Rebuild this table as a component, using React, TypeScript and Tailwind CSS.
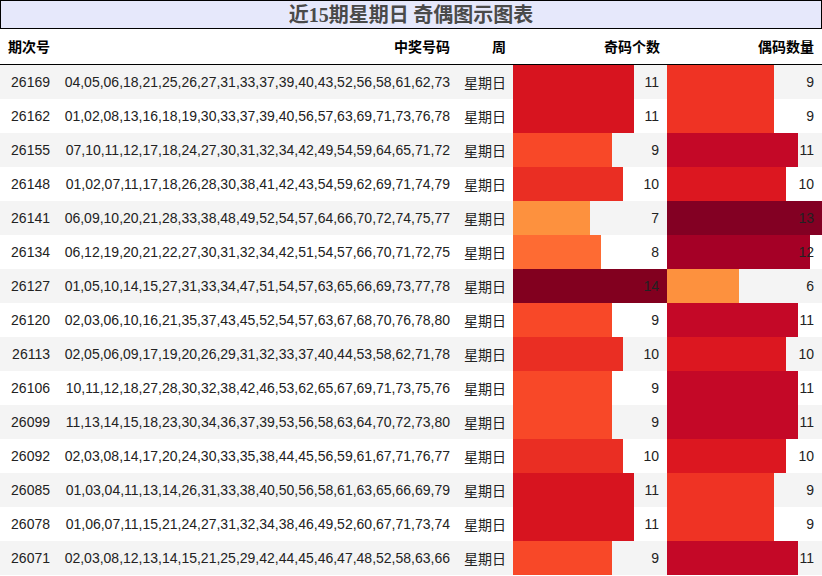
import React from "react";

type Row = { id: string; nums: string; odd: number; even: number };

const rows: Row[] = [
  { id: "26169", nums: "04,05,06,18,21,25,26,27,31,33,37,39,40,43,52,56,58,61,62,73", odd: 11, even: 9 },
  { id: "26162", nums: "01,02,08,13,16,18,19,30,33,37,39,40,56,57,63,69,71,73,76,78", odd: 11, even: 9 },
  { id: "26155", nums: "07,10,11,12,17,18,24,27,30,31,32,34,42,49,54,59,64,65,71,72", odd: 9, even: 11 },
  { id: "26148", nums: "01,02,07,11,17,18,26,28,30,38,41,42,43,54,59,62,69,71,74,79", odd: 10, even: 10 },
  { id: "26141", nums: "06,09,10,20,21,28,33,38,48,49,52,54,57,64,66,70,72,74,75,77", odd: 7, even: 13 },
  { id: "26134", nums: "06,12,19,20,21,22,27,30,31,32,34,42,51,54,57,66,70,71,72,75", odd: 8, even: 12 },
  { id: "26127", nums: "01,05,10,14,15,27,31,33,34,47,51,54,57,63,65,66,69,73,77,78", odd: 14, even: 6 },
  { id: "26120", nums: "02,03,06,10,16,21,35,37,43,45,52,54,57,63,67,68,70,76,78,80", odd: 9, even: 11 },
  { id: "26113", nums: "02,05,06,09,17,19,20,26,29,31,32,33,37,40,44,53,58,62,71,78", odd: 10, even: 10 },
  { id: "26106", nums: "10,11,12,18,27,28,30,32,38,42,46,53,62,65,67,69,71,73,75,76", odd: 9, even: 11 },
  { id: "26099", nums: "11,13,14,15,18,23,30,34,36,37,39,53,56,58,63,64,70,72,73,80", odd: 9, even: 11 },
  { id: "26092", nums: "02,03,08,14,17,20,24,30,33,35,38,44,45,56,59,61,67,71,76,77", odd: 10, even: 10 },
  { id: "26085", nums: "01,03,04,11,13,14,26,31,33,38,40,50,56,58,61,63,65,66,69,79", odd: 11, even: 9 },
  { id: "26078", nums: "01,06,07,11,15,21,24,27,31,32,34,38,46,49,52,60,67,71,73,74", odd: 11, even: 9 },
  { id: "26071", nums: "02,03,08,12,13,14,15,21,25,29,42,44,45,46,47,48,52,58,63,66", odd: 9, even: 11 },
];

const oddColors: Record<number, string> = {
  7: "#fd913e",
  8: "#fe6b33",
  9: "#f84828",
  10: "#ea2e23",
  11: "#d7141f",
  14: "#82001f",
};
const evenColors: Record<number, string> = {
  6: "#fd913e",
  9: "#ef3324",
  10: "#dc1720",
  11: "#c40827",
  12: "#a50026",
  13: "#830023",
};

const font = { fontFamily: '"Liberation Sans", "Noto Sans CJK SC", sans-serif' };

function BarCell({ value, max, color }: { value: number; max: number; color: string }) {
  return (
    <div className="relative flex items-center justify-end pr-2 h-full">
      <div
        className="absolute left-0 top-0 h-full"
        style={{ width: `${(value / max) * 100}%`, backgroundColor: color }}
      />
      <span className="relative">{value}</span>
    </div>
  );
}

export default function App() {
  return (
    <div className="w-[822px] h-[576px] bg-white text-[14px] text-[#222] overflow-hidden" style={font}>
      <div className="h-[29px] border border-black bg-[#e6e8fb] flex items-center justify-center">
        <span
          className="text-[20px] font-bold text-[#4a4a4a] leading-none"
          style={{ fontFamily: '"Noto Sans CJK SC", sans-serif' }}
        >
          近<span style={{ fontFamily: '"Liberation Serif", serif' }}>15</span>期星期日 奇偶图示图表
        </span>
      </div>
      <div
        className="h-[36px] border-b border-black grid grid-cols-[57px_400px_56px_154px_155px] items-center font-bold text-[14px] text-black"
        style={{ fontFamily: '"Noto Sans CJK SC", sans-serif' }}
      >
        <div className="pl-[8px]">期次号</div>
        <div className="text-right pr-[7px]">中奖号码</div>
        <div className="text-right pr-[7px]">周</div>
        <div className="text-right pr-[7px]">奇码个数</div>
        <div className="text-right pr-[8px]">偶码数量</div>
      </div>
      {rows.map((r, i) => (
        <div
          key={r.id}
          className={`h-[34px] grid grid-cols-[57px_400px_56px_154px_155px] items-center ${
            i % 2 === 0 ? "bg-[#f4f4f4]" : "bg-white"
          }`}
        >
          <div className="text-right pr-[7px]">{r.id}</div>
          <div className="text-right pr-[7px] whitespace-nowrap">{r.nums}</div>
          <div className="text-right pr-[7px]" style={{ fontFamily: '"Noto Sans CJK SC", sans-serif' }}>
            星期日
          </div>
          <BarCell value={r.odd} max={14} color={oddColors[r.odd]} />
          <BarCell value={r.even} max={13} color={evenColors[r.even]} />
        </div>
      ))}
    </div>
  );
}
